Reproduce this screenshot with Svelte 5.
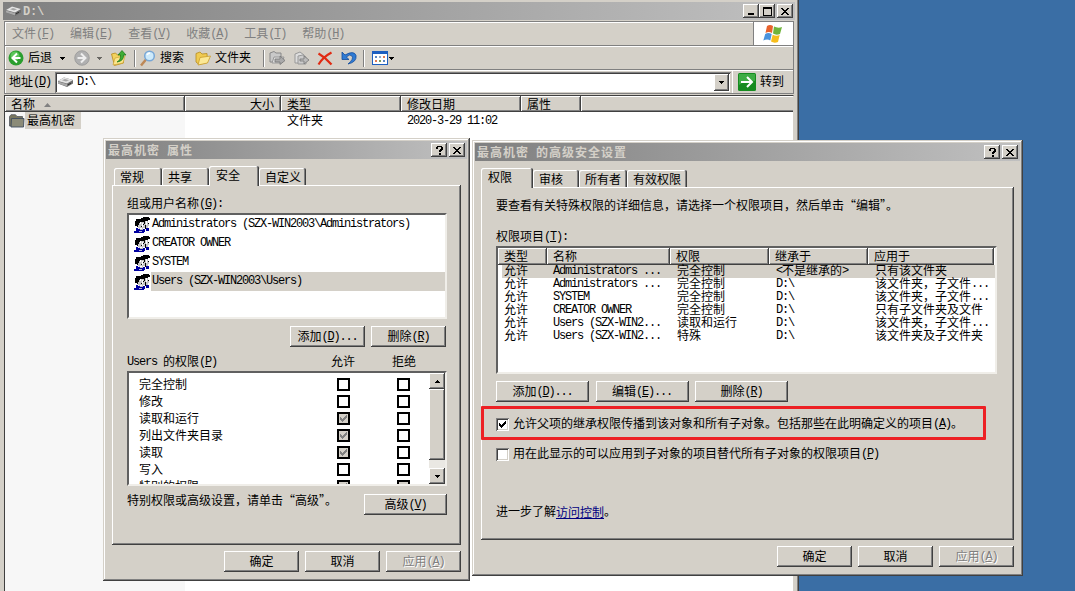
<script>
    const menus = ['文件(&F)', '编辑(&E)', '查看(&V)', '收藏(&A)', '工具(&T)', '帮助(&H)'];
    const columns = ['名称', '大小', '类型', '修改日期', '属性', ''];
    const users = [
        'Administrators (SZX-WIN2003\\Administrators)',
        'CREATOR OWNER',
        'SYSTEM',
        'Users (SZX-WIN2003\\Users)'
    ];
    const permissions = [
        { name: '完全控制' },
        { name: '修改' },
        { name: '读取和运行', inherited: true },
        { name: '列出文件夹目录', inherited: true },
        { name: '读取', inherited: true },
        { name: '写入' },
        { name: '特别的权限', inherited: true, locked: true }
    ];
    const entries = [
        ['允许', 'Administrators ...', '完全控制', '<不是继承的>', '只有该文件夹'],
        ['允许', 'Administrators ...', '完全控制', 'D:\\', '该文件夹，子文件...'],
        ['允许', 'SYSTEM', '完全控制', 'D:\\', '该文件夹，子文件...'],
        ['允许', 'CREATOR OWNER', '完全控制', 'D:\\', '只有子文件夹及文件'],
        ['允许', 'Users (SZX-WIN2...', '读取和运行', 'D:\\', '该文件夹，子文件...'],
        ['允许', 'Users (SZX-WIN2...', '特殊', 'D:\\', '该文件夹及子文件夹']
    ];

    // split into full width runs, half width runs and "&X" access keys
    function runs(text) {
        return text.match(/&[A-Z]|[\x20-\x25\x27-\x7e]+|[^\x20-\x7e]+/g) || [];
    }
</script>

{#snippet t(text)}<span class="t">{#each runs(text) as r}{#if r[0] === '&'}<span class="half key">{r[1]}</span>{:else if r.charCodeAt(0) < 127}<span class="half">{r}</span>{:else}{r}{/if}{/each}</span>{/snippet}

{#snippet button(text, cls = '')}
    <button class="btn {cls}">{@render t(text)}</button>
{/snippet}

{#snippet closeIcon()}
    <svg width="8" height="7" shape-rendering="crispEdges"><path d="M0 0h2v1h1v1h2V1h1V0h2v1H7v1H6v1H5v1h1v1h1v1h1v1H6V6H5V5H3v1H2v1H0V6h1V5h1V4h1V3H2V2H1V1H0z"/></svg>
{/snippet}

{#snippet dialogTitle(text)}
    <div class="title">
        <b>{@render t(text)}</b>
        <button class="cap help"><svg width="7" height="9" shape-rendering="crispEdges"><path d="M1 0h5v1h1v3H6v1H5v1H3V4h1V3h1V1H2v2H0V1h1zM3 7h2v2H3z"/></svg></button>
        <button class="cap">{@render closeIcon()}</button>
    </div>
{/snippet}

{#snippet drive()}
    <svg width="17" height="12" viewBox="0 0 17 12"><path d="M1 5L7 1.5 16 4v3.5L10 11 1 7.5z" fill="#6c6c6c"/><path d="M1 5l6-3.5L16 4l-6 3.5z" fill="#e4e4e4"/><path d="M5 4.2l3-1.3 4 1.3-3 1.4z" fill="#a5a5a5"/><path d="M1 5.5l9 2.5v2.5L1 7.5z" fill="#a9a9a9"/><path d="M11 8.8l3-1.6" stroke="#333"/></svg>
{/snippet}

{#snippet people()}
    <svg class="people" width="16" height="16" viewBox="0 0 16 16" shape-rendering="crispEdges"><path d="M2 2h5V1h2V0h6v1h1v2h-2v5h-2v2H3V9H1V4h1z" fill="#000"/><path d="M5 6h2V5h3v2h1v4H9v2H5v-2H4V8h1zM11 4h4v5h-1v2h-2V8h-1z" fill="#c8c8c8"/><path d="M6 5h1v2H6zM8 6h1v4H8zM12 4h1v4h-1zM14 3h1v3h-1zM6 11h2v1H6z" fill="#fff"/><path d="M9 7h1v1H9zM14 6h1v1h-1zM11 8h1v4h-1zM7 9h1v1H7z" fill="#000"/><path d="M2 11h2v1h2v1h3v-1h2v3h-1v1H0v-2h2zM12 11h3v3h-3z" fill="#0000a0"/><path d="M5 14h3v1H5z" fill="#b8b8d8"/></svg>
{/snippet}

{#snippet down()}
    <svg width="5" height="3" viewBox="0 0 5 3" shape-rendering="crispEdges"><path d="M0 0h5v1H4v1H3v1H2V2H1V1H0z"/></svg>
{/snippet}

{#snippet tick(color)}
    <svg width="7" height="7" viewBox="0 0 7 7" shape-rendering="crispEdges"><path d="M0 2h1v1h1v1h1V3h1V2h1V1h1V0h1v3H6v1H5v1H4v1H3v1H2V6H1V5H0z" fill={color}/></svg>
{/snippet}

<div class="desktop">
    <div class="explorer">
        <div class="title">
            {@render drive()}
            <b>{@render t('D:\\')}</b>
            <button class="cap"><svg width="8" height="8"><path d="M1 6h6v2H1z"/></svg></button>
            <button class="cap"><svg width="9" height="9" shape-rendering="crispEdges"><path d="M0 0h9v9H0zM1 2v6h7V2z" fill-rule="evenodd"/></svg></button>
            <button class="cap last">{@render closeIcon()}</button>
        </div>
        <div class="bars">
            <div class="menubar">
                {#each menus as m}{@render t(m)}{/each}
                <div class="flag">
                    <svg width="21" height="19" viewBox="0 0 21 19">
                        <path d="M4 2q3-2 6 0L9 9Q6 7 2.500 9z" fill="#e8622c"/>
                        <path d="M11 2.500q4 2 8 .5L17 10q-4 1.500-7-.5z" fill="#70b43c"/>
                        <path d="M2.200 10q3-2 6.500 0L7.300 16.500q-3-2-7 0z" fill="#4b93dd"/>
                        <path d="M9.700 10.700q3.500 2 7 .3L15 18q-4 1.500-7-.5z" fill="#f6bd1c"/>
                    </svg>
                </div>
            </div>
            <div class="toolbar">
                <svg width="16" height="16" viewBox="0 0 16 16"><circle cx="8" cy="8" r="7.500" fill="#2a9e2e"/><circle cx="7" cy="6" r="4.500" fill="#5cc65a"/><path d="M9 3.500L4.500 8 9 12.500M5 8h7.500" fill="none" stroke="#fff" stroke-width="2"/></svg>
                {@render t('后退')}
                {@render down()}
                <svg width="16" height="16" viewBox="0 0 16 16"><circle cx="8" cy="8" r="7.300" fill="#b0b0b0" stroke="#909090" stroke-width=".7"/><path d="M7 3.500L11.500 8 7 12.500M11 8H3.500" fill="none" stroke="#eee" stroke-width="2"/></svg>
                <span class="dim">{@render down()}</span>
                <svg width="16" height="16" viewBox="0 0 16 16"><path d="M.5 4l4-1 2 2 5-1 1 9-9 2.500z" fill="#f3d25e" stroke="#b98a1c" stroke-width=".8"/><path d="M2 15l2-7 10-2-2 7z" fill="#fbe58b" stroke="#c79c2d" stroke-width=".6"/><path d="M6 12q4-2 3.500-7H7l4-4.500L15 5h-2.500Q13 11 6 12z" fill="#3dac35" stroke="#157315" stroke-width=".7"/></svg>
                <i class="sep"></i>
                <svg width="17" height="17" viewBox="0 0 17 17"><path d="M2 15.500l5-6" stroke="#bd8857" stroke-width="2.500"/><circle cx="10.500" cy="6" r="4.800" fill="#cdeafb" stroke="#78a7d6" stroke-width="1.500"/><path d="M8 5q1-2 3-2" stroke="#fff" fill="none" stroke-width="1.500"/></svg>
                {@render t('搜索')}
                <svg width="16" height="15" viewBox="0 0 16 15"><path d="M1 11V2.500L5 1l2 2 5-.5.500 9L4 13.500z" fill="#f0cb52" stroke="#b58a20" stroke-width=".8"/><path d="M3 14l2-7.500L15.500 5 12.500 12z" fill="#fbe895" stroke="#c99d2c" stroke-width=".8"/></svg>
                {@render t('文件夹')}
                <i class="sep"></i>
                <svg width="17" height="16" viewBox="0 0 17 16"><path d="M1 3l4-1.500L7 3h5v9H1z" fill="#c9c9c9" stroke="#888"/><path d="M3 13l2-6h10l-2 6z" fill="#ddd" stroke="#999"/><path d="M6 9h5V6l5 4.500-5 4V12H6z" fill="#aaa" stroke="#777" stroke-width=".8"/></svg>
                <svg width="17" height="16" viewBox="0 0 17 16"><path d="M2 4l5-2 4 3v8H2z" fill="#ddd" stroke="#999"/><path d="M5 6l5-1 3 2v7H5z" fill="#ccc" stroke="#999"/><path d="M7 9h4V6l5 4-5 4v-3H7z" fill="#bbb" stroke="#777" stroke-width=".8"/></svg>
                <svg width="16" height="15" viewBox="0 0 16 15"><path d="M1.500 2.500q7 4 13 11M14.500 1.500Q6 6 1.500 13.500" fill="none" stroke="#e02a12" stroke-width="2.200"/></svg>
                <svg width="16" height="15" viewBox="0 0 16 15"><path d="M1 1v7.500h7L5.300 6Q9 2.500 11 5q2 3-4 8 9-2 8-8.500Q13-1 4 4z" fill="#2f7bd4" stroke="#134b9c" stroke-width=".8"/></svg>
                <i class="sep"></i>
                <svg width="16" height="14" viewBox="0 0 16 14" shape-rendering="crispEdges"><path d="M0 0h16v14H0z" fill="#1d5fc0"/><path d="M1 3h14v10H1z" fill="#fff"/><path d="M3 5h2v2H3zM11 9h2v2h-2z" fill="#5b86c4"/><path d="M7 5h2v2H7z" fill="#92a9c9"/><path d="M11 5h2v2h-2zM3 9h2v2H3z" fill="#e07b55"/><path d="M7 9h2v2H7z" fill="#7c9e5b"/></svg>
                {@render down()}
            </div>
            <div class="address">
                {@render t('地址(&D)')}
                <div class="combo">
                    {@render drive()}
                    {@render t('D:\\')}
                    <button class="cap">{@render down()}</button>
                </div>
                <div class="go">
                    <svg width="18" height="18" viewBox="0 0 18 18"><rect width="18" height="18" rx="1.500" fill="#168b20"/><path d="M1 1h16v7Q8 7 1 12z" fill="#3eac45"/><path d="M9 4l5 5-5 5M3 9h10" fill="none" stroke="#fff" stroke-width="2"/></svg>
                    {@render t('转到')}
                </div>
            </div>
        </div>
        <div class="files">
            <div class="head">
                {#each columns as c, i}
                    <div class="col">
                        {@render t(c)}
                        {#if i === 0}<svg class="sort" width="7" height="4" viewBox="0 0 7 4"><path d="M3.500 0L7 4H0z" fill="#808080"/></svg>{/if}
                    </div>
                {/each}
            </div>
            <div class="file">
                <div class="name">
                    <svg width="16" height="14" viewBox="0 0 16 14"><path d="M.5 2.500L2 .7h4.500L8 2.500h5.500v9.500H.5z" fill="#78765f" stroke="#555b62" stroke-width=".8"/><path d="M2.500 4.500H15L14.500 13H2z" fill="#8b8b78" stroke="#3f4d60" stroke-width=".9"/></svg>
                    <span class="picked">{@render t('最高机密')}</span>
                </div>
                <span></span>
                {@render t('文件夹')}
                {@render t('2020-3-29 11:02')}
            </div>
        </div>
    </div>

    <div class="dialog props">
        {@render dialogTitle('最高机密 属性')}
        <div class="tabs">
            <div class="tab">{@render t('常规')}</div>
            <div class="tab">{@render t('共享')}</div>
            <div class="tab active">{@render t('安全')}</div>
            <div class="tab">{@render t('自定义')}</div>
        </div>
        <div class="panel">
            <div class="label">{@render t('组或用户名称(&G):')}</div>
            <div class="box users">
                {#each users as u, i}
                    <div class="user">
                        {@render people()}
                        <div class="who" class:selected={i === 3}>{@render t(u)}</div>
                    </div>
                {/each}
            </div>
            <div class="pair">
                {@render button('添加(&D)...')}
                {@render button('删除(&R)')}
            </div>
            <div class="label permhead">
                {@render t('Users 的权限(&P)')}
                {@render t('允许')}
                {@render t('拒绝')}
            </div>
            <div class="box perms">
                <div class="permlist">
                    {#each permissions as p}
                        <div class="perm">
                            {@render t(p.name)}
                            <span class="flat" class:gray={p.inherited}>{#if p.inherited}{@render tick('#808080')}{/if}</span>
                            <span class="flat" class:gray={p.locked}></span>
                        </div>
                    {/each}
                </div>
                <div class="scroll">
                    <button class="cap up">{@render down()}</button>
                    <div class="thumb"></div>
                    <div class="track"></div>
                    <button class="cap">{@render down()}</button>
                </div>
            </div>
            <div class="more">
                {@render t('特别权限或高级设置，请单击“高级”。')}
                {@render button('高级(&V)', 'wide')}
            </div>
        </div>
        <div class="footer">
            {@render button('确定')}
            {@render button('取消')}
            {@render button('应用(&A)', 'disabled')}
        </div>
    </div>

    <div class="dialog advanced">
        {@render dialogTitle('最高机密 的高级安全设置')}
        <div class="tabs">
            <div class="tab active">{@render t('权限')}</div>
            <div class="tab">{@render t('审核')}</div>
            <div class="tab">{@render t('所有者')}</div>
            <div class="tab">{@render t('有效权限')}</div>
        </div>
        <div class="panel">
            <div class="label">{@render t('要查看有关特殊权限的详细信息，请选择一个权限项目，然后单击“编辑”。')}</div>
            <div class="label items">{@render t('权限项目(&T):')}</div>
            <div class="box entries">
                <div class="head">
                    {#each ['类型', '名称', '权限', '继承于', '应用于'] as c}
                        <div class="col">{@render t(c)}</div>
                    {/each}
                </div>
                {#each entries as e, i}
                    <div class="entry" class:selected={i === 0}>
                        {#each e as cell}{@render t(cell)}{/each}
                    </div>
                {/each}
            </div>
            <div class="pair">
                {@render button('添加(&D)...')}
                {@render button('编辑(&E)...')}
                {@render button('删除(&R)')}
            </div>
            <div class="check">
                <span class="sunk">{@render tick('#000')}</span>
                {@render t('允许父项的继承权限传播到该对象和所有子对象。包括那些在此明确定义的项目(&A)。')}
            </div>
            <div class="check">
                <span class="sunk"></span>
                {@render t('用在此显示的可以应用到子对象的项目替代所有子对象的权限项目(&P)')}
            </div>
            <div class="learn">{@render t('进一步了解')}<a href="#access">{@render t('访问控制')}</a>{@render t('。')}</div>
        </div>
        <div class="footer">
            {@render button('确定')}
            {@render button('取消')}
            {@render button('应用(&A)', 'disabled')}
        </div>
        <div class="marker"></div>
    </div>
</div>

<style>
    :global(body) {
        margin: 0;
        overflow: hidden;
    }

    .desktop {
        position: relative;
        width: 1075px;
        height: 591px;
        overflow: hidden;
        background: #3a6ea5;
        font: 12px/14px "Noto Sans CJK SC", sans-serif;
        color: #000;
    }

    .desktop * {
        box-sizing: border-box;
    }

    svg {
        display: block;
        flex: none;
    }

    .t {
        white-space: pre;
        display: inline-block;
        line-height: 12px;
        height: 14px;
    }

    .half {
        font-family: "Liberation Mono", monospace;
        font-size: 12px;
        letter-spacing: -1.2px;
        line-height: 1px;
        vertical-align: 1px;
    }

    .key {
        text-decoration: underline;
        text-underline-offset: 1px;
    }

    /* windows */
    .explorer {
        position: absolute;
        left: -1px;
        top: -1px;
        width: 800px;
        height: 620px;
        padding: 3px 4px;
        background: #d4d0c8;
        box-shadow: inset -1px 0 #404040, inset -2px 0 #808080;
    }

    .dialog {
        position: absolute;
        padding: 3px;
        background: #d4d0c8;
        box-shadow: inset -1px -1px #404040, inset 1px 1px #d4d0c8, inset -2px -2px #808080, inset 2px 2px #fff;
    }

    .props {
        left: 103px;
        top: 138px;
        width: 367px;
        height: 443px;
    }

    .advanced {
        left: 472px;
        top: 140px;
        width: 551px;
        height: 436px;
    }

    .title {
        display: flex;
        align-items: center;
        height: 18px;
        padding: 0 2px 0 1px;
        background: linear-gradient(to right, #808080, #c0c0c0);
    }

    .title b {
        flex: 1;
        margin-left: 1px;
        color: #d4d0c8;
        letter-spacing: 1px;
    }

    .title .half {
        letter-spacing: -0.2px;
    }

    .explorer .title {
        padding: 0 2px;
    }

    .cap, .btn {
        display: flex;
        align-items: center;
        justify-content: center;
        flex: none;
        padding: 0;
        border: 0;
        background: #d4d0c8;
        color: #000;
        font: inherit;
        box-shadow: inset -1px -1px #404040, inset 1px 1px #fff, inset -2px -2px #808080;
    }

    .cap {
        width: 16px;
        height: 14px;
    }

    .cap.help {
        margin-right: 2px;
    }

    .cap.last {
        margin-left: 2px;
    }

    .btn {
        width: 75px;
        height: 21px;
    }

    .disabled {
        color: #808080;
        text-shadow: 1px 1px #fff;
    }

    /* explorer */
    .bars {
        margin: 1px 1px 0;
        border-left: 1px solid #808080;
        border-right: 1px solid #808080;
    }

    .bars > div {
        display: flex;
        align-items: center;
        height: 24px;
        border-top: 1px solid #fff;
        border-bottom: 1px solid #808080;
        box-shadow: inset 1px 0 #fff;
    }

    .menubar {
        gap: 16px;
        padding-left: 7px;
        color: #808080;
    }

    .bars > .menubar {
        height: 25px;
        border-top: 1px solid #808080;
        box-shadow: inset 1px 1px #fff;
    }

    .flag {
        display: flex;
        align-items: center;
        justify-content: center;
        width: 40px;
        height: 23px;
        margin-left: auto;
        border-left: 1px solid #808080;
        background: #fff;
    }

    .toolbar {
        display: grid !important;
        grid-template-columns: 20px 32px 14px 23px 14px 23px 5px 21px 35px 20px 48px 6px 24px 24px 24px 22px 9px 17px 6px;
        padding-left: 3px;
    }

    .dim {
        opacity: 0.5;
    }

    .sep {
        width: 2px;
        height: 17px;
        border-left: 1px solid #808080;
        border-right: 1px solid #fff;
    }

    .address {
        padding-left: 4px;
    }

    .combo {
        display: flex;
        align-items: center;
        width: 676px;
        height: 21px;
        margin-left: 4px;
        padding: 0 2px;
        background: #fff;
        box-shadow: inset 1px 1px #808080, inset -1px -1px #d4d0c8, inset 2px 2px #404040;
    }

    .combo .t {
        margin-left: 3px;
    }

    .combo .cap {
        width: 15px;
        height: 17px;
        margin-left: auto;
    }

    .go {
        display: flex;
        align-items: center;
        gap: 4px;
        height: 22px;
        margin-left: 1px;
        padding-left: 5px;
        border-left: 1px solid #fff;
    }

    .files {
        height: 500px;
        margin: 1px 1px 0;
        border: solid #404040;
        border-width: 1px 0 0 1px;
        border-right: 1px solid #d4d0c8;
        background: linear-gradient(#f7f7f7, #f7f7f7) 0 0 / 180px 100% no-repeat #fff;
    }

    .head {
        display: grid;
    }

    .col {
        display: flex;
        align-items: center;
        height: 16px;
        padding-left: 6px;
        background: #d4d0c8;
        box-shadow: inset -1px -1px #404040, inset 1px 1px #fff, inset -2px -2px #808080;
    }

    .files .head, .file {
        grid-template-columns: 180px 96px 120px 120px 60px 1fr;
    }

    .files .col {
        padding-top: 1px;
    }

    .files .col:nth-child(2) {
        justify-content: flex-end;
        padding-right: 7px;
    }

    .files .col:last-child {
        box-shadow: inset 0 -1px #404040, inset 1px 1px #fff, inset 0 -2px #808080;
    }

    .sort {
        margin-left: 9px;
    }

    .file {
        display: grid;
        align-items: center;
        height: 17px;
    }

    .file > .t {
        margin-left: 6px;
    }

    .name {
        display: flex;
        align-items: center;
        padding-left: 4px;
    }

    .picked {
        display: flex;
        align-items: center;
        width: 56px;
        height: 17px;
        padding-left: 2px;
        background: #d4d0c8;
    }

    /* dialogs */
    .tabs {
        display: flex;
        align-items: flex-end;
        height: 26px;
        margin-left: 8px;
    }

    .tab {
        display: flex;
        align-items: center;
        width: 48px;
        height: 17px;
        padding: 3px 0 0 6px;
        border-radius: 2px 2px 0 0;
        background: #d4d0c8;
        box-shadow: inset -1px 0 #404040, inset 1px 1px #fff, inset -2px 0 #808080;
    }

    .tab:nth-child(2), .tab:nth-child(4) {
        width: 47px;
    }

    .tab.active {
        z-index: 1;
        width: 50px;
        height: 20px;
        margin-bottom: -1px;
        padding: 0 0 0 7px;
    }

    .advanced .tabs {
        margin-left: 6px;
    }

    .advanced .tab.active {
        width: 52px;
    }

    .advanced .tab:nth-child(2) {
        width: 46px;
    }

    .advanced .tab:nth-child(4) {
        width: 60px;
    }

    .panel {
        height: 360px;
        margin: 0 6px;
        padding: 11px 14px 0 15px;
        box-shadow: inset -1px -1px #404040, inset 1px 1px #fff, inset -2px -2px #808080;
    }

    .label {
        display: flex;
        align-items: center;
        height: 16px;
    }

    .box {
        border: 2px solid;
        border-color: #606060 #f0eee9 #f0eee9 #606060;
        background: #fff;
        overflow: hidden;
    }

    .users {
        height: 106px;
        margin-top: 1px;
    }

    .user {
        display: flex;
        align-items: center;
        height: 19px;
        padding-left: 5px;
    }

    .who {
        display: flex;
        align-items: center;
        flex: 1;
        height: 19px;
        margin-left: 1px;
        padding: 0 0 1px 1px;
    }

    .selected {
        background: #d4d0c8;
    }

    .pair {
        display: flex;
        justify-content: flex-end;
        gap: 6px;
        margin: 7px 1px 0 0;
    }

    .permhead {
        margin-top: 7px;
    }

    .permhead .t:nth-child(2) {
        width: 61px;
        margin-left: auto;
    }

    .permhead .t:nth-child(3) {
        margin-right: 31px;
    }

    .perms {
        display: flex;
        height: 115px;
        margin-top: 1px;
    }

    .permlist {
        flex: 1;
        padding-top: 3px;
    }

    .perm {
        display: grid;
        grid-template-columns: 198px 60px 13px;
        align-items: center;
        height: 17px;
        padding-left: 10px;
    }

    .flat {
        display: flex;
        align-items: center;
        justify-content: center;
        width: 13px;
        height: 13px;
        border: 2px solid #000;
    }

    .gray {
        background: #d4d0c8;
    }

    .scroll {
        display: flex;
        flex-direction: column;
        width: 16px;
    }

    .scroll .cap {
        height: 16px;
    }

    .up svg {
        transform: scaleY(-1);
    }

    .thumb {
        height: 71px;
        background: #d4d0c8;
        box-shadow: inset -1px -1px #404040, inset 1px 1px #fff, inset -2px -2px #808080;
    }

    .track {
        flex: 1;
        background: #eae8e3;
    }

    .more {
        display: flex;
        justify-content: space-between;
        margin-top: 8px;
    }

    .btn.wide {
        width: 83px;
    }

    .footer {
        display: flex;
        justify-content: flex-end;
        gap: 6px;
        margin: 6px 6px 0 0;
    }

    .advanced .panel {
        height: 353px;
        padding: 11px 17px 0 15px;
    }

    .items {
        margin-top: 15px;
    }

    .entries {
        height: 128px;
        margin-top: 1px;
    }

    .entries .head {
        grid-template-columns: 49px 123px 99px 99px 1fr;
        padding-right: 1px;
    }

    .entries .col {
        height: 17px;
    }

    .entry {
        display: grid;
        grid-template-columns: 49px 124px 99px 99px 1fr;
        height: 13px;
        margin-left: 4px;
        padding-left: 2px;
        line-height: 13px;
    }

    .entry .t {
        line-height: 10px;
        height: 13px;
    }

    .advanced .pair {
        justify-content: flex-start;
        gap: 6.5px;
    }

    .advanced .pair .btn {
        width: 93px;
    }

    .check {
        display: flex;
        align-items: center;
        gap: 4px;
        height: 14px;
        margin-top: 16px;
    }

    .pair + .check {
        margin-top: 15px;
    }

    .sunk {
        display: flex;
        align-items: center;
        justify-content: center;
        width: 13px;
        height: 13px;
        background: #fff;
        box-shadow: inset 1px 1px #808080, inset -1px -1px #fff, inset 2px 2px #404040, inset -2px -2px #d4d0c8;
    }

    .learn {
        display: flex;
        margin-top: 44px;
    }

    a {
        height: 14px;
        color: #000080;
        text-decoration: none;
        border-bottom: 1px solid #000080;
    }

    /* red frame drawn over the inheritance option */
    .marker {
        position: absolute;
        left: 9px;
        top: 266px;
        width: 505px;
        height: 34px;
        border: 3px solid #ed2024;
        border-radius: 1px;
    }
</style>
